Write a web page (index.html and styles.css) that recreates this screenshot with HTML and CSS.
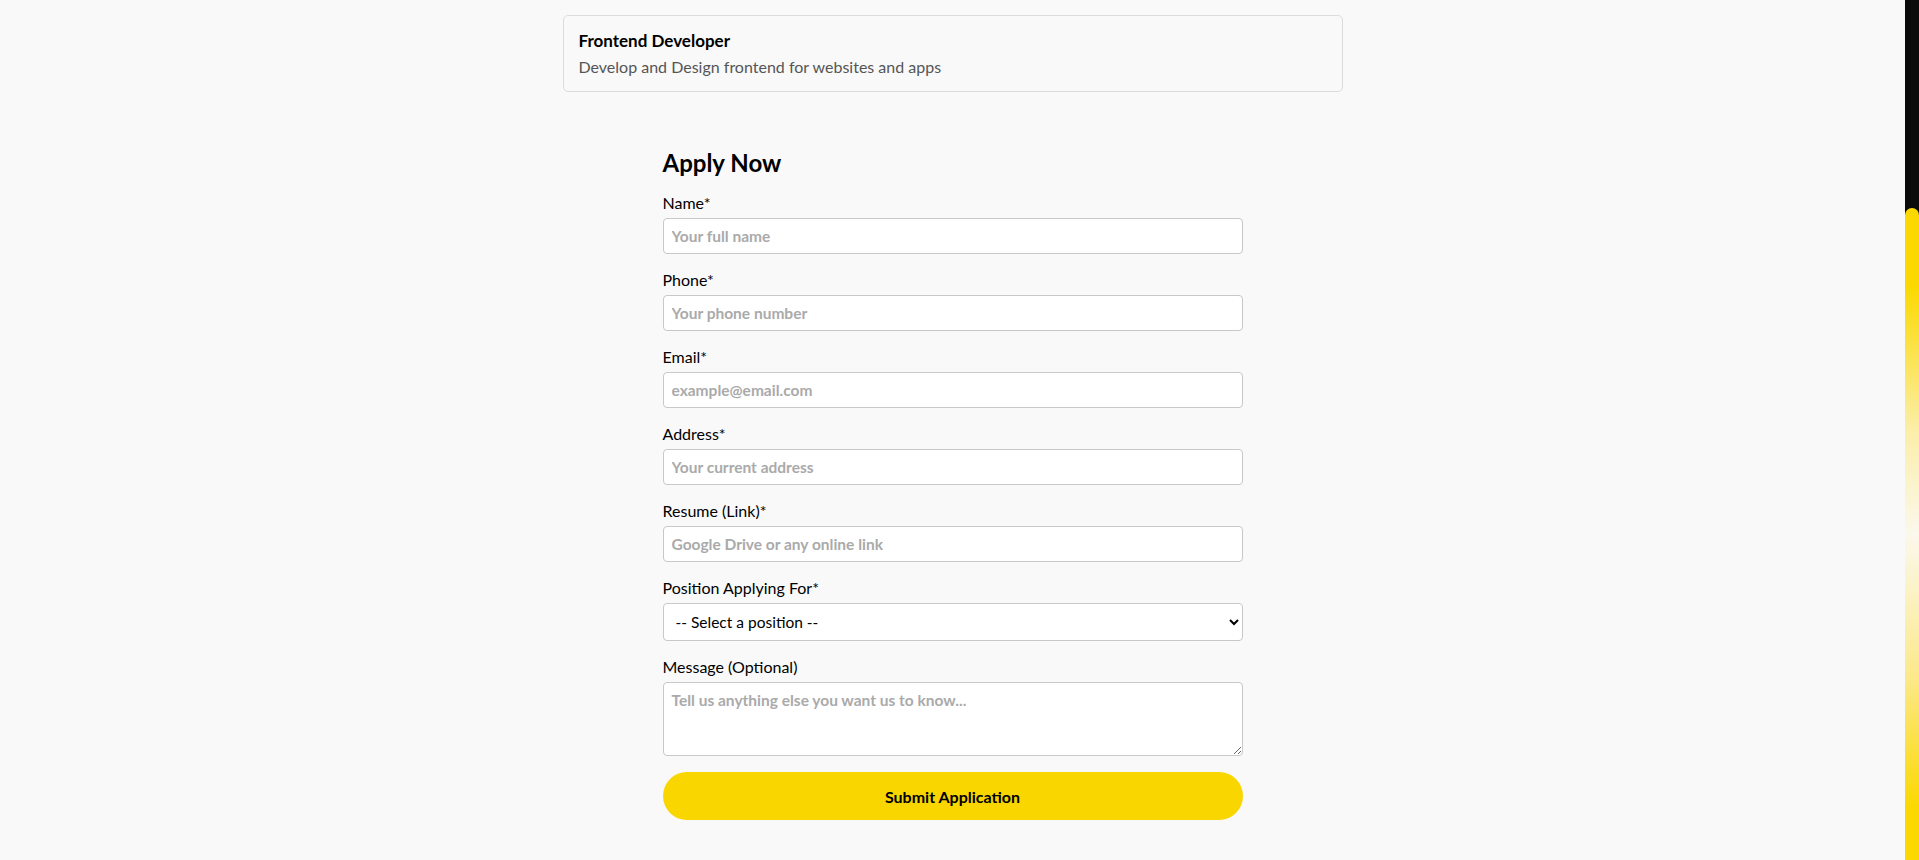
FILE: index.html
```html
<!DOCTYPE html>
<html lang="en">
<head>
<meta charset="utf-8">
<title>Apply Now</title>
<link rel="stylesheet" href="styles.css">
</head>
<body>
<div class="page">
  <main class="main">
    <section class="job-card">
      <h3 class="job-title">Frontend Developer</h3>
      <p class="job-desc">Develop and Design frontend for websites and apps</p>
    </section>

    <form class="apply-form">
      <h2 class="apply-title">Apply Now</h2>

      <div class="field">
        <label class="label" for="name">Name*</label>
        <input class="control" id="name" type="text" placeholder="Your full name">
      </div>
      <div class="field">
        <label class="label" for="phone">Phone*</label>
        <input class="control" id="phone" type="text" placeholder="Your phone number">
      </div>
      <div class="field">
        <label class="label" for="email">Email*</label>
        <input class="control" id="email" type="email" placeholder="example@email.com">
      </div>
      <div class="field">
        <label class="label" for="address">Address*</label>
        <input class="control" id="address" type="text" placeholder="Your current address">
      </div>
      <div class="field">
        <label class="label" for="resume">Resume (Link)*</label>
        <input class="control" id="resume" type="text" placeholder="Google Drive or any online link">
      </div>
      <div class="field">
        <label class="label" for="position">Position Applying For*</label>
        <select class="control select" id="position">
          <option>-- Select a position --</option>
          <option>Frontend Developer</option>
        </select>
      </div>
      <div class="field">
        <label class="label" for="message">Message (Optional)</label>
        <textarea class="control textarea" id="message" placeholder="Tell us anything else you want us to know..."></textarea>
      </div>

      <button class="submit" type="button">Submit Application</button>
    </form>
  </main>
  <div class="scrollbar">
    <div class="thumb"></div>
  </div>
</div>
</body>
</html>
```

FILE: styles.css
```css
* {
  box-sizing: border-box;
}

html, body {
  margin: 0;
  padding: 0;
  height: 100%;
  overflow: hidden;
}

body {
  background: #f9f9f9;
  font-family: "Lato", "Noto Sans", sans-serif;
  color: #000;
}

.page {
  display: flex;
  height: 100vh;
}

.main {
  flex: 1;
  padding-top: 15px;
}

.job-card {
  width: 780px;
  margin: 0 auto;
  border: 1px solid #dcdcdc;
  border-radius: 5px;
  padding: 15px 15px 14px;
  background: #f9f9f9;
}

.job-title {
  margin: 0;
  font-size: 17px;
  line-height: 20px;
  font-weight: 700;
}

.job-desc {
  margin: 6px 0 0;
  font-size: 16px;
  line-height: 20px;
  color: #555;
}

.apply-form {
  width: 580px;
  margin: 56px auto 0;
}

.apply-title {
  margin: 0 0 15px;
  font-size: 24px;
  line-height: 30px;
  font-weight: 700;
}

.field {
  margin-bottom: 16px;
}

.label {
  display: block;
  font-size: 16px;
  line-height: 20px;
  margin-bottom: 5px;
}

.control {
  display: block;
  width: 100%;
  height: 36px;
  border: 1px solid #c8c8c8;
  border-radius: 4px;
  background: #fff;
  padding: 0 8px;
  font-family: inherit;
  font-size: 15.5px;
  font-weight: 700;
  color: #000;
  outline: none;
}

.control::placeholder {
  color: #aaa;
  font-weight: 700;
}

.select {
  height: 38px;
  padding: 0 8px;
  font-weight: 400;
  font-size: 15.5px;
}

.textarea {
  height: 74px;
  padding: 8px;
  resize: vertical;
}

.submit {
  display: block;
  width: 100%;
  height: 48px;
  border: none;
  border-radius: 24px;
  background: #fad600;
  font-family: inherit;
  font-size: 16px;
  font-weight: 700;
  color: #000;
}

.scrollbar {
  width: 14px;
  height: 100vh;
  background: #0b0b0b;
  padding-top: 208px;
  display: flex;
  flex-direction: column;
}

.thumb {
  flex: 1;
  border-radius: 7px 7px 0 0;
  background: linear-gradient(to bottom, #fbd800 0%, #fbd900 12%, #fbeea8 34%, #fbf8ec 50%, #fce98a 72%, #fbd800 92%);
}
```
